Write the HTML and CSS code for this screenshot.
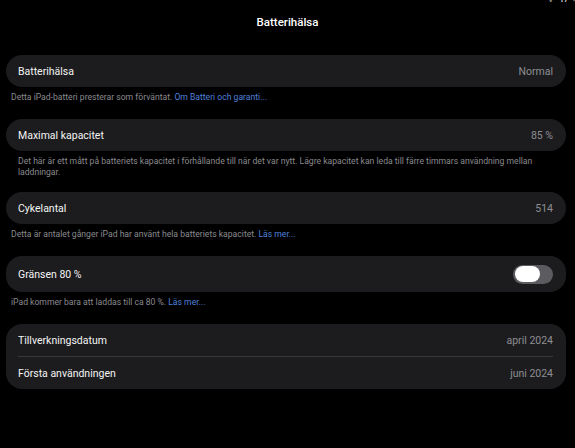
FILE: index.html
```html
<!DOCTYPE html>
<html lang="sv">
<head>
<meta charset="utf-8">
<title>Batterihälsa</title>
<link rel="stylesheet" href="styles.css">
</head>
<body>
<div class="status"><span class="status-text">⌔ 47 %</span></div>
<header class="title">Batterihälsa</header>
<main class="list">
  <section class="card">
    <div class="row"><span class="label">Batterihälsa</span><span class="value">Normal</span></div>
  </section>
  <p class="note">Detta iPad-batteri presterar som förväntat. <span class="link">Om Batteri och garanti...</span></p>

  <section class="card">
    <div class="row"><span class="label">Maximal kapacitet</span><span class="value">85 %</span></div>
  </section>
  <p class="note indent">Det här är ett mått på batteriets kapacitet i förhållande till när det var nytt. Lägre kapacitet kan leda till färre timmars användning mellan laddningar.</p>

  <section class="card">
    <div class="row"><span class="label">Cykelantal</span><span class="value">514</span></div>
  </section>
  <p class="note">Detta är antalet gånger iPad har använt hela batteriets kapacitet. <span class="link">Läs mer...</span></p>

  <section class="card">
    <div class="row tall"><span class="label">Gränsen 80 %</span><span class="toggle"><span class="knob"></span></span></div>
  </section>
  <p class="note">iPad kommer bara att laddas till ca 80 %. <span class="link">Läs mer...</span></p>

  <section class="card">
    <div class="row"><span class="label">Tillverkningsdatum</span><span class="value">april 2024</span></div>
    <div class="sep"></div>
    <div class="row"><span class="label">Första användningen</span><span class="value">juni 2024</span></div>
  </section>
</main>
</body>
</html>
```
FILE: styles.css
```css
html, body {
  margin: 0;
  padding: 0;
  background: #000;
}
body {
  width: 575px;
  height: 448px;
  overflow: hidden;
  font-family: Roboto, "Liberation Sans", sans-serif;
  color: #fff;
}
.status {
  height: 4px;
  overflow: hidden;
  display: flex;
  justify-content: flex-end;
}
.status-text {
  font-size: 10px;
  line-height: 10px;
  margin-top: -6px;
  margin-right: -4px;
  color: #e5e5e5;
}
.title {
  text-align: center;
  font-weight: 500;
  font-size: 11.5px;
  line-height: 14px;
  padding-top: 11px;
  box-sizing: border-box;
  height: 51px;
}
.list {
  padding: 0 9px 0 6px;
}
.card {
  background: #1c1c1e;
  border-radius: 16px;
}
.row {
  height: 32px;
  display: flex;
  align-items: center;
  justify-content: space-between;
  padding: 0 13px 0 12px;
  font-size: 10.5px;
}
.row.tall {
  height: 36px;
}
.label {
  color: #f4f4f4;
}
.value {
  color: #8e8e93;
}
.sep {
  height: 1px;
  background: #38383a;
  margin: 0 13px 0 12px;
}
.note {
  margin: 5px 0 16px;
  padding: 0 5px;
  font-size: 8.6px;
  line-height: 11px;
  color: #8a8a8f;
}
.note.indent {
  padding: 0 30px 0 12px;
  margin-bottom: 14px;
}
.link {
  color: #4f80dc;
}
.toggle {
  width: 40px;
  height: 19px;
  border-radius: 10px;
  background: #5b5b60;
  display: flex;
  align-items: center;
  padding: 0 2px;
  box-sizing: border-box;
}
.knob {
  width: 25px;
  height: 16px;
  border-radius: 8px;
  background: #fff;
}
```
